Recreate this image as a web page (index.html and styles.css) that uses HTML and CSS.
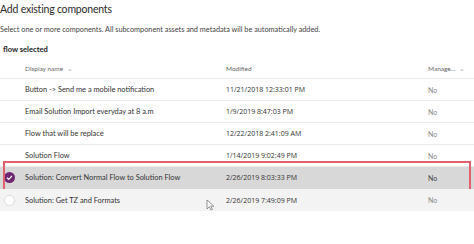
FILE: index.html
```html
<!DOCTYPE html>
<html>
<head>
  <title>Add existing components</title>
  <meta name="viewport" content="width=device-width, initial-scale=1.0">
  <link rel="stylesheet" href="styles.css">
</head>
<body>
  <div class="panel">
    <h1>Add existing components</h1>
    <p class="intro">Select one or more components. All subcomponent assets and metadata will be automatically added.</p>
    <p class="count">flow selected</p>

    <div class="grid">
      <div class="row head">
        <div class="cell check"></div>
        <div class="cell">Display name <span class="chev">&#8964;</span></div>
        <div class="cell">Modified</div>
        <div class="cell">Manage... <span class="chev">&#8964;</span></div>
      </div>
      <div class="row">
        <div class="cell check"></div>
        <div class="cell">Button -&gt; Send me a mobile notification</div>
        <div class="cell date">11/21/2018 12:33:01 PM</div>
        <div class="cell muted">No</div>
      </div>
      <div class="row">
        <div class="cell check"></div>
        <div class="cell">Email Solution Import everyday at 8 a.m</div>
        <div class="cell date">1/9/2019 8:47:03 PM</div>
        <div class="cell muted">No</div>
      </div>
      <div class="row">
        <div class="cell check"></div>
        <div class="cell">Flow that will be replace</div>
        <div class="cell date">12/22/2018 2:41:09 AM</div>
        <div class="cell muted">No</div>
      </div>
      <div class="row">
        <div class="cell check"></div>
        <div class="cell">Solution Flow</div>
        <div class="cell date">1/14/2019 9:02:49 PM</div>
        <div class="cell muted">No</div>
      </div>
      <div class="row selected">
        <div class="cell check">
          <svg width="11" height="11" viewBox="0 0 11 11">
            <circle cx="5.5" cy="5.5" r="5.5" fill="#6e2673"/>
            <path d="M3 5.7 L4.8 7.4 L8 3.9" fill="none" stroke="#fff" stroke-width="1.3"/>
          </svg>
        </div>
        <div class="cell">Solution: Convert Normal Flow to Solution Flow</div>
        <div class="cell date">2/26/2019 8:03:33 PM</div>
        <div class="cell no">No</div>
        <div class="mark"></div>
      </div>
      <div class="row hover">
        <div class="cell check">
          <svg width="11" height="11" viewBox="0 0 11 11">
            <circle cx="5.5" cy="5.5" r="5" fill="#fff" stroke="#d4d4d4" stroke-width="0.8"/>
          </svg>
        </div>
        <div class="cell">Solution: Get TZ and Formats</div>
        <div class="cell date">2/26/2019 7:49:09 PM</div>
        <div class="cell muted">No</div>
        <svg class="pointer" width="9" height="12" viewBox="0 0 9 12">
          <path d="M1 1 L1 10 L3.3 7.8 L5 11 L6.4 10.3 L4.8 7.2 L7.8 7.2 Z" fill="#fff" stroke="#777" stroke-width="0.8"/>
        </svg>
      </div>
    </div>
  </div>
</body>
</html>
```

FILE: styles.css
```css
body {
  margin: 0;
  background-color: white;
  font-family: Lato, 'Open Sans', sans-serif;
  color: #333;
}
.panel {
  width: 474px;
  height: 244px;
  overflow: hidden;
}
h1 {
  margin: 0;
  font-size: 10.5px;
  font-weight: 400;
  line-height: 19px;
  color: #2b2b2b;
  letter-spacing: -0.2px;
  transform-origin: left center;
}
.intro {
  margin: 0;
  padding-top: 4px;
  font-size: 7.3px;
  line-height: 13px;
  color: #444;
}
.count {
  margin: 0;
  padding: 6px 0 0 3px;
  font-size: 7.6px;
  font-weight: 700;
  line-height: 14px;
  color: #222;
}
.grid {
  margin-top: 2px;
}
.row {
  position: relative;
  display: grid;
  grid-template-columns: 25px 201px 202px 1fr;
  align-items: center;
  height: 21px;
  border-bottom: 1px solid #eaeaea;
  font-size: 7.4px;
}
.head {
  height: 20px;
  font-size: 6.5px;
  color: #666;
}
.chev {
  color: #aaa;
  font-size: 7px;
  margin-left: 2px;
}
.check {
  display: flex;
  justify-content: center;
  padding-right: 6px;
}
.date {
  font-family: 'Open Sans', Lato, sans-serif;
  font-size: 7px;
}
.muted {
  color: #888;
  font-size: 7px;
}
.no {
  color: #444;
  font-size: 7px;
}
.selected {
  background-color: #d8d8d8;
  border-bottom-color: #d8d8d8;
}
.hover {
  background-color: #f3f3f3;
  border-bottom: none;
  height: 22px;
}
.mark {
  position: absolute;
  top: -6px;
  bottom: -3px;
  left: 3px;
  right: 3px;
  border: 2px solid #e0606b;
  pointer-events: none;
}
.pointer {
  position: absolute;
  left: 206px;
  top: 10px;
}
```
